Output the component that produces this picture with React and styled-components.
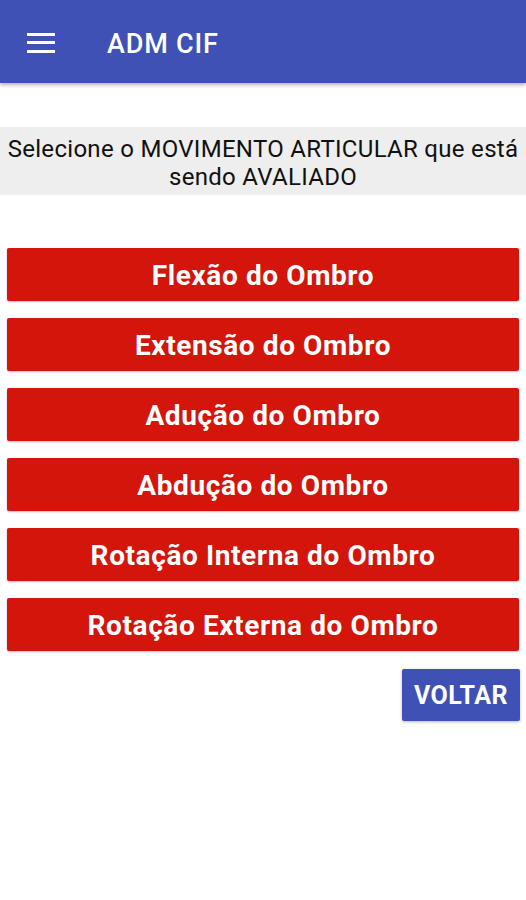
import React from "react";
import styled, { createGlobalStyle } from "styled-components";

const Global = createGlobalStyle`
  html, body { margin: 0; padding: 0; background: #ffffff; }
  body { font-family: Roboto, "Liberation Sans", Arial, sans-serif; }
  * { box-sizing: border-box; }
`;

const Page = styled.div`
  width: 526px;
  min-height: 900px;
  background: #ffffff;
  display: flex;
  flex-direction: column;
`;

const AppBar = styled.header`
  height: 83px;
  background: #3f51b5;
  display: flex;
  align-items: center;
  padding-left: 27px;
  gap: 52px;
  box-shadow: 0 2px 4px rgba(0, 0, 0, 0.3);
  position: relative;
  z-index: 1;
`;

const MenuButton = styled.div`
  width: 28px;
  height: 20px;
  display: flex;
  flex-direction: column;
  justify-content: space-between;
  margin-top: 2px;
`;

const MenuLine = styled.span`
  display: block;
  height: 3px;
  background: #ffffff;
`;

const Title = styled.h1`
  margin: 0;
  color: #ffffff;
  font-family: Roboto, "Liberation Sans", sans-serif;
  font-weight: 500;
  font-size: 27px;
  letter-spacing: 0.8px;
  margin-top: 4px;
`;

const Content = styled.main`
  padding: 44px 7px 0 7px;
  display: flex;
  flex-direction: column;
`;

const Prompt = styled.div`
  background: #eeeeee;
  margin: 0 -7px;
  padding: 8px 0 4px;
  text-align: center;
  color: #111111;
  font-size: 24px;
  letter-spacing: 0.3px;
  line-height: 28px;
  font-family: Roboto, "Liberation Sans", sans-serif;
`;

const List = styled.div`
  margin-top: 53px;
  display: flex;
  flex-direction: column;
  gap: 17px;
`;

const RedButton = styled.button`
  height: 53px;
  width: 100%;
  border: none;
  border-radius: 2px;
  background: #d3150b;
  color: #ffffff;
  font-family: Roboto, "Liberation Sans", sans-serif;
  font-weight: 700;
  font-size: 28px;
  letter-spacing: 0.6px;
  box-shadow: 0 1px 2px rgba(0, 0, 0, 0.25);
  display: flex;
  align-items: center;
  justify-content: center;
  padding: 2px 0 0;
  cursor: pointer;
`;

const Footer = styled.div`
  display: flex;
  justify-content: flex-end;
  margin-top: 18px;
`;

const BackButton = styled.button`
  width: 118px;
  height: 52px;
  border: none;
  border-radius: 2px;
  background: #3f51b5;
  color: #ffffff;
  font-family: Roboto, "Liberation Sans", sans-serif;
  font-weight: 700;
  font-size: 25px;
  letter-spacing: 0.5px;
  box-shadow: 0 1px 3px rgba(0, 0, 0, 0.3);
  margin-right: -1px;
  padding: 0;
  cursor: pointer;
`;

const items = [
  "Flexão do Ombro",
  "Extensão do Ombro",
  "Adução do Ombro",
  "Abdução do Ombro",
  "Rotação Interna do Ombro",
  "Rotação Externa do Ombro",
];

export default function App() {
  return (
    <>
      <Global />
      <Page>
        <AppBar>
          <MenuButton>
            <MenuLine />
            <MenuLine />
            <MenuLine />
          </MenuButton>
          <Title>ADM CIF</Title>
        </AppBar>
        <Content>
          <Prompt>
            Selecione o MOVIMENTO ARTICULAR que está
            <br />
            sendo AVALIADO
          </Prompt>
          <List>
            {items.map((t) => (
              <RedButton key={t}>{t}</RedButton>
            ))}
          </List>
          <Footer>
            <BackButton>VOLTAR</BackButton>
          </Footer>
        </Content>
      </Page>
    </>
  );
}
